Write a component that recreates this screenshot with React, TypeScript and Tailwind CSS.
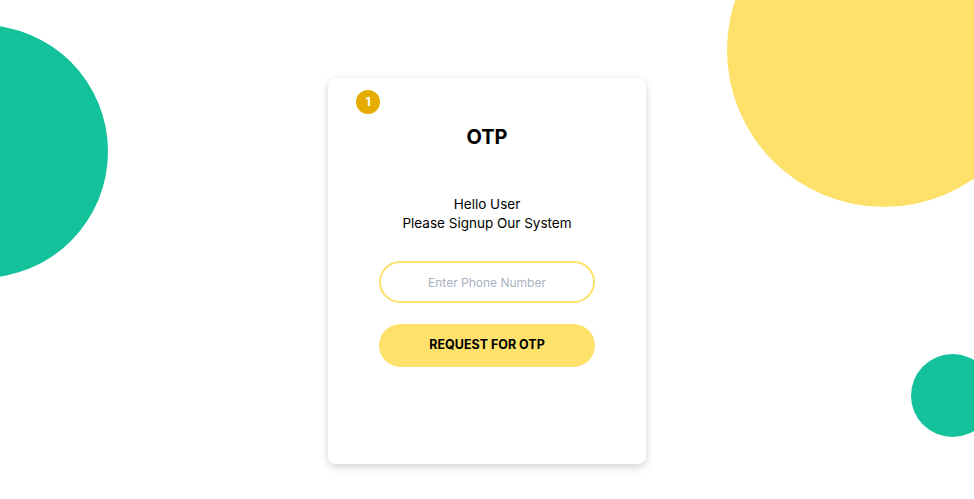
export default function App() {
  return (
    <div className="relative h-[499px] w-full overflow-hidden bg-white font-['Inter',sans-serif]">
      {/* decorative blobs */}
      <div className="absolute left-[-145px] top-[25px] h-[253px] w-[253px] rounded-full bg-[#13c19a]" />
      <div className="absolute left-[727px] top-[-107px] h-[314px] w-[314px] rounded-full bg-[#fee16a]" />
      <div className="absolute left-[911px] top-[354px] h-[83px] w-[83px] rounded-full bg-[#13c19a]" />

      <div className="relative flex justify-center pt-[78px]">
        <div className="flex h-[386px] w-[318px] flex-col rounded-lg bg-white pt-3 shadow-[0_3px_8px_rgba(0,0,0,0.18)]">
          <div className="ml-7 flex h-6 w-6 items-center justify-center rounded-full bg-[#e6ad00] text-[12px] font-bold text-white">
            1
          </div>
          <h1 className="mt-[9px] h-7 text-center text-[20px] font-bold leading-7 text-black">OTP</h1>
          <div className="mt-[44px] text-center text-[13.5px] leading-[19px] text-black">
            <p>Hello User</p>
            <p>Please Signup Our System</p>
          </div>
          <input
            type="text"
            placeholder="Enter Phone Number"
            className="mx-auto mt-[28px] h-[42px] w-[216px] rounded-full border-2 border-[#fee16a] bg-white text-center text-[12px] text-gray-700 outline-none placeholder:text-[#a9b1bf]"
          />
          <button className="mx-auto mt-[21px] h-[43px] w-[216px] rounded-full bg-[#fee16a] text-[12.5px] font-bold text-black">
            REQUEST FOR OTP
          </button>
        </div>
      </div>
    </div>
  )
}
